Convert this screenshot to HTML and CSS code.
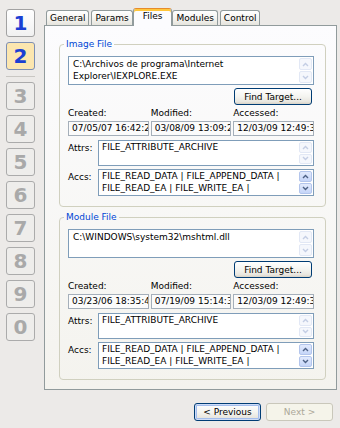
FILE: index.html
```html
<!doctype html>
<html lang="en">
<head>
  <meta charset="utf-8"/>
  <title>Process Wizard - Files</title>
  <link rel="stylesheet" href="styles.css">
</head>
<body>

  <nav class="steps">
    <div class="step done">1</div>
    <div class="step current">2</div>
    <hr class="step-sep">
    <div class="step">3</div>
    <div class="step">4</div>
    <div class="step">5</div>
    <div class="step">6</div>
    <div class="step">7</div>
    <div class="step">8</div>
    <div class="step">9</div>
    <div class="step">0</div>
  </nav>

  <main class="wizard">
    <div class="tabs">
      <div class="tab">General</div>
      <div class="tab">Params</div>
      <div class="tab active">Files</div>
      <div class="tab">Modules</div>
      <div class="tab">Control</div>
    </div>

    <section class="panel">
      <fieldset class="group">
        <legend>Image File</legend>
        <div class="box path">
          <div class="box-text">C:\Archivos de programa\Internet<br>Explorer\IEXPLORE.EXE</div>
          <div class="spin">
            <span class="arrow"><svg width="7" height="5" viewBox="0 0 7 5"><path d="M1 4 L3.5 1.5 L6 4"/></svg></span>
            <span class="arrow"><svg width="7" height="5" viewBox="0 0 7 5"><path d="M1 1 L3.5 3.5 L6 1"/></svg></span>
          </div>
        </div>
        <div class="actions"><button class="btn find">Find Target...</button></div>
        <div class="times">
          <div class="time"><span>Created:</span><span class="field">07/05/07 16:42:2</span></div>
          <div class="time"><span>Modified:</span><span class="field">03/08/09 13:09:2</span></div>
          <div class="time"><span>Accessed:</span><span class="field">12/03/09 12:49:3</span></div>
        </div>
        <div class="row attrs">
          <span class="row-label">Attrs:</span>
          <div class="box caps">
            <div class="box-text">FILE_ATTRIBUTE_ARCHIVE</div>
            <div class="spin">
              <span class="arrow"><svg width="7" height="5" viewBox="0 0 7 5"><path d="M1 4 L3.5 1.5 L6 4"/></svg></span>
              <span class="arrow"><svg width="7" height="5" viewBox="0 0 7 5"><path d="M1 1 L3.5 3.5 L6 1"/></svg></span>
            </div>
          </div>
        </div>
        <div class="row accs">
          <span class="row-label">Accs:</span>
          <div class="box caps">
            <div class="box-text">FILE_READ_DATA | FILE_APPEND_DATA |<br>FILE_READ_EA | FILE_WRITE_EA |</div>
            <div class="spin live">
              <span class="arrow"><svg width="7" height="5" viewBox="0 0 7 5"><path d="M1 4 L3.5 1.5 L6 4"/></svg></span>
              <span class="arrow"><svg width="7" height="5" viewBox="0 0 7 5"><path d="M1 1 L3.5 3.5 L6 1"/></svg></span>
            </div>
          </div>
        </div>
      </fieldset>

      <fieldset class="group">
        <legend>Module File</legend>
        <div class="box path">
          <div class="box-text">C:\WINDOWS\system32\mshtml.dll</div>
          <div class="spin">
            <span class="arrow"><svg width="7" height="5" viewBox="0 0 7 5"><path d="M1 4 L3.5 1.5 L6 4"/></svg></span>
            <span class="arrow"><svg width="7" height="5" viewBox="0 0 7 5"><path d="M1 1 L3.5 3.5 L6 1"/></svg></span>
          </div>
        </div>
        <div class="actions"><button class="btn find">Find Target...</button></div>
        <div class="times">
          <div class="time"><span>Created:</span><span class="field">03/23/06 18:35:4</span></div>
          <div class="time"><span>Modified:</span><span class="field">07/19/09 15:14:3</span></div>
          <div class="time"><span>Accessed:</span><span class="field">12/03/09 12:49:3</span></div>
        </div>
        <div class="row attrs">
          <span class="row-label">Attrs:</span>
          <div class="box caps">
            <div class="box-text">FILE_ATTRIBUTE_ARCHIVE</div>
            <div class="spin">
              <span class="arrow"><svg width="7" height="5" viewBox="0 0 7 5"><path d="M1 4 L3.5 1.5 L6 4"/></svg></span>
              <span class="arrow"><svg width="7" height="5" viewBox="0 0 7 5"><path d="M1 1 L3.5 3.5 L6 1"/></svg></span>
            </div>
          </div>
        </div>
        <div class="row accs">
          <span class="row-label">Accs:</span>
          <div class="box caps">
            <div class="box-text">FILE_READ_DATA | FILE_APPEND_DATA |<br>FILE_READ_EA | FILE_WRITE_EA |</div>
            <div class="spin live">
              <span class="arrow"><svg width="7" height="5" viewBox="0 0 7 5"><path d="M1 4 L3.5 1.5 L6 4"/></svg></span>
              <span class="arrow"><svg width="7" height="5" viewBox="0 0 7 5"><path d="M1 1 L3.5 3.5 L6 1"/></svg></span>
            </div>
          </div>
        </div>
      </fieldset>
    </section>

    <footer class="footer">
      <button class="btn default">&lt; Previous</button>
      <button class="btn" disabled>Next &gt;</button>
    </footer>
  </main>

</body>
</html>
```

FILE: styles.css
```css
:root {
  --page: #ECEAE8;
  --edit-border: solid 1px #7F9DB9;
  --tab-border: solid 1px #919B9C;
  --blue-text: #0046D5;
  --step-blue: #1B3FD3;
}
* { box-sizing: border-box; }
body {
  margin: 0; padding: 8px 3px 0 6px;
  display: flex; gap: 9px;
  background-color: var(--page); color: #000;
  font: 9px/12px "DejaVu Sans", sans-serif;
}

/* step buttons down the left side */
.steps { display: flex; flex-direction: column; gap: 5px; width: 29px; margin-top: 1px; }
.step {
  height: 28px; display: flex; align-items: center; justify-content: center;
  border: solid 1px #ABABAB; border-radius: 3px;
  background-color: #EEEDEB; color: #A9A9A9;
  font: bold 20px "DejaVu Sans", sans-serif;
}
.step.done { background: linear-gradient(#FFFFFF, #F1F1F1); color: var(--step-blue); border-color: #A2A2A2; }
.step.current { background-color: #FCE6AF; border-color: #7E8FB3; color: var(--step-blue); }
.step-sep { margin: 1px 0 0; height: 0; border: 0; border-top: solid 1px #C9C7C3; }

/* tab control */
.wizard { width: 293px; display: flex; flex-direction: column; }
.tabs { display: flex; align-items: flex-end; gap: 2px; height: 17px; padding-left: 2px; position: relative; z-index: 1; }
.tab {
  height: 15px; padding: 0 3px; line-height: 14px;
  border: var(--tab-border); border-bottom: 0; border-radius: 3px 3px 0 0;
  background: linear-gradient(#FFFFFF, #F3F2EE 60%, #E5E4DD);
}
.tab.active {
  height: 18px; margin: 0 -2px -1px; padding: 0 9px; line-height: 15px;
  background: #FCFCFE; border-top-color: #E68B2C;
  box-shadow: inset 0 2px 0 #FFC73C;
}
.panel {
  border: var(--tab-border);
  background: linear-gradient(#FCFCFE, #F4F3EE);
  padding: 12px 10px 9px 14px;
}

/* group boxes */
.group { margin: 0; min-width: 0; border: solid 1px #D0D0BF; border-radius: 4px; padding: 6px 11px 10px 8px; }
.group + .group { margin-top: 4px; }
.group legend { margin-left: -4px; padding: 0 2px; color: var(--blue-text); line-height: 12px; }

.box { display: flex; border: var(--edit-border); background-color: #FFFFFF; }
.box-text { flex: 1; min-width: 0; padding: 1px 3px 0 4px; line-height: 12px; white-space: nowrap; overflow: hidden; }
.path { height: 29px; }
.caps .box-text { padding-top: 0; padding-left: 3px; }
.attrs .box { height: 26px; }
.accs .box { height: 27px; }

.spin { width: 15px; display: flex; flex-direction: column; gap: 1px; padding: 1px; }
.arrow {
  flex: 1; display: flex; align-items: center; justify-content: center;
  border: solid 1px #E2E8F5; border-radius: 2px; background-color: #F5F7FC;
}
.arrow path { fill: none; stroke: #C3CDE4; stroke-width: 1.4; }
.spin.live .arrow { border-color: #B3C5EC; background: linear-gradient(#E2EAFD, #C5D5F8); }
.spin.live .arrow path { stroke: #4D6185; }

.actions { display: flex; justify-content: flex-end; margin-top: 3px; padding-right: 2px; }

.times { display: grid; grid-template-columns: repeat(3, 1fr); column-gap: 2px; }
.time { display: flex; flex-direction: column; min-width: 0; line-height: 16px; }
.field {
  height: 15px; padding: 0 3px; line-height: 13px;
  border: solid 1px #A5AFBA; background-color: #FBFBFB;
  white-space: nowrap; overflow: hidden;
}

.row { display: flex; margin-top: 3px; }
.row.attrs { margin-top: 4px; }
.row-label { width: 30px; padding-top: 2px; }
.row .box { flex: 1; }

/* push buttons */
.btn {
  padding: 0; height: 18px; color: #000;
  font: 9px "DejaVu Sans", sans-serif;
  border: solid 1px #003C74; border-radius: 3px;
  background: linear-gradient(#FFFFFF, #F4F4F0 50%, #E8E6DF 85%, #D8D2C6);
}
.btn.find { width: 78px; height: 17px; }
.btn.default { box-shadow: inset 0 0 0 1px #CEDCF7, inset 0 0 0 2px #A3BDEC; }
.btn:disabled { border-color: #C9C7BA; background: #F5F4EA; color: #ACA899; }
.footer { display: flex; justify-content: flex-end; gap: 5px; margin-top: 13px; padding-right: 4px; }
.footer .btn { width: 67px; }
```
